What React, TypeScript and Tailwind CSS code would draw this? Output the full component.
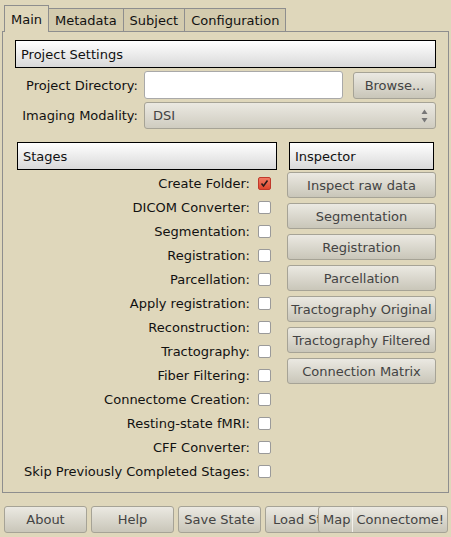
const stages = [
  { label: 'Create Folder:', checked: true },
  { label: 'DICOM Converter:' },
  { label: 'Segmentation:' },
  { label: 'Registration:' },
  { label: 'Parcellation:' },
  { label: 'Apply registration:' },
  { label: 'Reconstruction:' },
  { label: 'Tractography:' },
  { label: 'Fiber Filtering:' },
  { label: 'Connectome Creation:' },
  { label: 'Resting-state fMRI:' },
  { label: 'CFF Converter:' },
  { label: 'Skip Previously Completed Stages:' },
];

const inspectors = [
  'Inspect raw data',
  'Segmentation',
  'Registration',
  'Parcellation',
  'Tractography Original',
  'Tractography Filtered',
  'Connection Matrix',
];

const tabs = ['Metadata', 'Subject', 'Configuration'];

const btn =
  'flex items-center justify-center rounded-[3px] border border-[#a6a396] bg-gradient-to-b from-[#ebe9e2] to-[#c9c6b9] text-[#434343] whitespace-nowrap overflow-hidden';

function Header({ title, w }: { title: string; w: string }) {
  return (
    <div
      className={`${w} h-[28px] border border-black bg-gradient-to-b from-white to-[#d9d9d9] pl-[5px] flex items-center text-[#111]`}
    >
      {title}
    </div>
  );
}

function Check({ checked }: { checked?: boolean }) {
  if (checked) {
    return (
      <div className="w-[13px] h-[13px] rounded-[2px] border border-[#c0392b] bg-gradient-to-b from-[#f07a62] to-[#e0452c] flex items-center justify-center">
        <svg width="9" height="9" viewBox="0 0 9 9">
          <path d="M1.5 4.5 L3.5 7 L7.5 1.5" stroke="#2a1a1a" strokeWidth="1.6" fill="none" />
        </svg>
      </div>
    );
  }
  return <div className="w-[13px] h-[13px] rounded-[2px] border border-[#9a9a9a] bg-white" />;
}

export default function App() {
  return (
    <div
      className="w-[451px] h-[537px] bg-[#dfd7bb] text-[13px] leading-none text-[#111] overflow-hidden"
      style={{ fontFamily: '"DejaVu Sans", sans-serif' }}
    >
      {/* tabs */}
      <div className="flex items-end pl-[4px] pt-[5px] h-[32px]">
        <div className="relative z-10 h-[27px] px-[6px] border border-b-0 border-[#8e8e8e] bg-[#dfd7bb] flex items-center">
          Main
        </div>
        {tabs.map((t) => (
          <div
            key={t}
            className="h-[24px] px-[6px] -ml-px border border-[#8e8e8e] bg-[#d3cbae] flex items-center"
          >
            {t}
          </div>
        ))}
      </div>

      {/* panel */}
      <div className="mx-[2px] -mt-px h-[462px] w-[447px] border border-[#8e8e8e] pt-[8px]">
        <div className="pl-[12px]">
          <Header title="Project Settings" w="w-[421px]" />
        </div>

        <div className="flex items-center mt-[3px]">
          <div className="w-[141px] text-right pr-[6px]">Project Directory:</div>
          <div className="w-[199px] h-[28px] rounded-[3px] border border-[#a9a9a9] bg-white" />
          <div className={`${btn} ml-[10px] w-[83px] h-[27px]`}>Browse...</div>
        </div>

        <div className="flex items-center mt-[3px]">
          <div className="w-[141px] text-right pr-[6px]">Imaging Modality:</div>
          <div className="relative w-[292px] h-[27px] rounded-[3px] border border-[#a6a396] bg-gradient-to-b from-[#ebe9e2] to-[#cfccc0] flex items-center pl-[8px] text-[#434343]">
            DSI
            <svg className="absolute right-[7px] top-[6px]" width="7" height="14" viewBox="0 0 7 14">
              <path d="M3.5 0.5 L6.5 5 L0.5 5 Z" fill="#777" />
              <path d="M0.5 9 L6.5 9 L3.5 13.5 Z" fill="#777" />
            </svg>
          </div>
        </div>

        <div className="flex mt-[13px] pl-[14px]">
          <div className="w-[260px]">
            <Header title="Stages" w="w-[260px]" />
            <div className="mt-[1px]">
              {stages.map((s) => (
                <div key={s.label} className="h-[24px] flex items-center justify-end pr-[6px]">
                  <span className="mr-[8px]">{s.label}</span>
                  <Check checked={s.checked} />
                </div>
              ))}
            </div>
          </div>

          <div className="ml-[10px] w-[149px]">
            <div className="pl-[2px]">
              <Header title="Inspector" w="w-[145px]" />
            </div>
            <div className="mt-[2px] flex flex-col gap-[5px]">
              {inspectors.map((i) => (
                <div key={i} className={`${btn} w-[149px] h-[26px]`}>
                  {i}
                </div>
              ))}
            </div>
          </div>
        </div>
      </div>

      {/* bottom buttons */}
      <div className="flex mt-[13px] pl-[4px] gap-[4px] h-[27px]">
        <div className={`${btn} w-[83px]`}>About</div>
        <div className={`${btn} w-[83px]`}>Help</div>
        <div className={`${btn} w-[83px]`}>Save State</div>
        <div className={`${btn} w-[87px] !justify-start pl-[7px]`}>
          <span className="block w-[46px] overflow-hidden">Load State</span>
        </div>
        <div className={`${btn} relative z-10 -ml-[38px] w-[130px] !justify-start pl-[4px]`}>
          <span className="pr-[2px]">Map</span>
          <span className="h-full w-px bg-[#f2f0ea]" />
          <span className="pl-[3px]">Connectome!</span>
        </div>
      </div>
    </div>
  );
}
